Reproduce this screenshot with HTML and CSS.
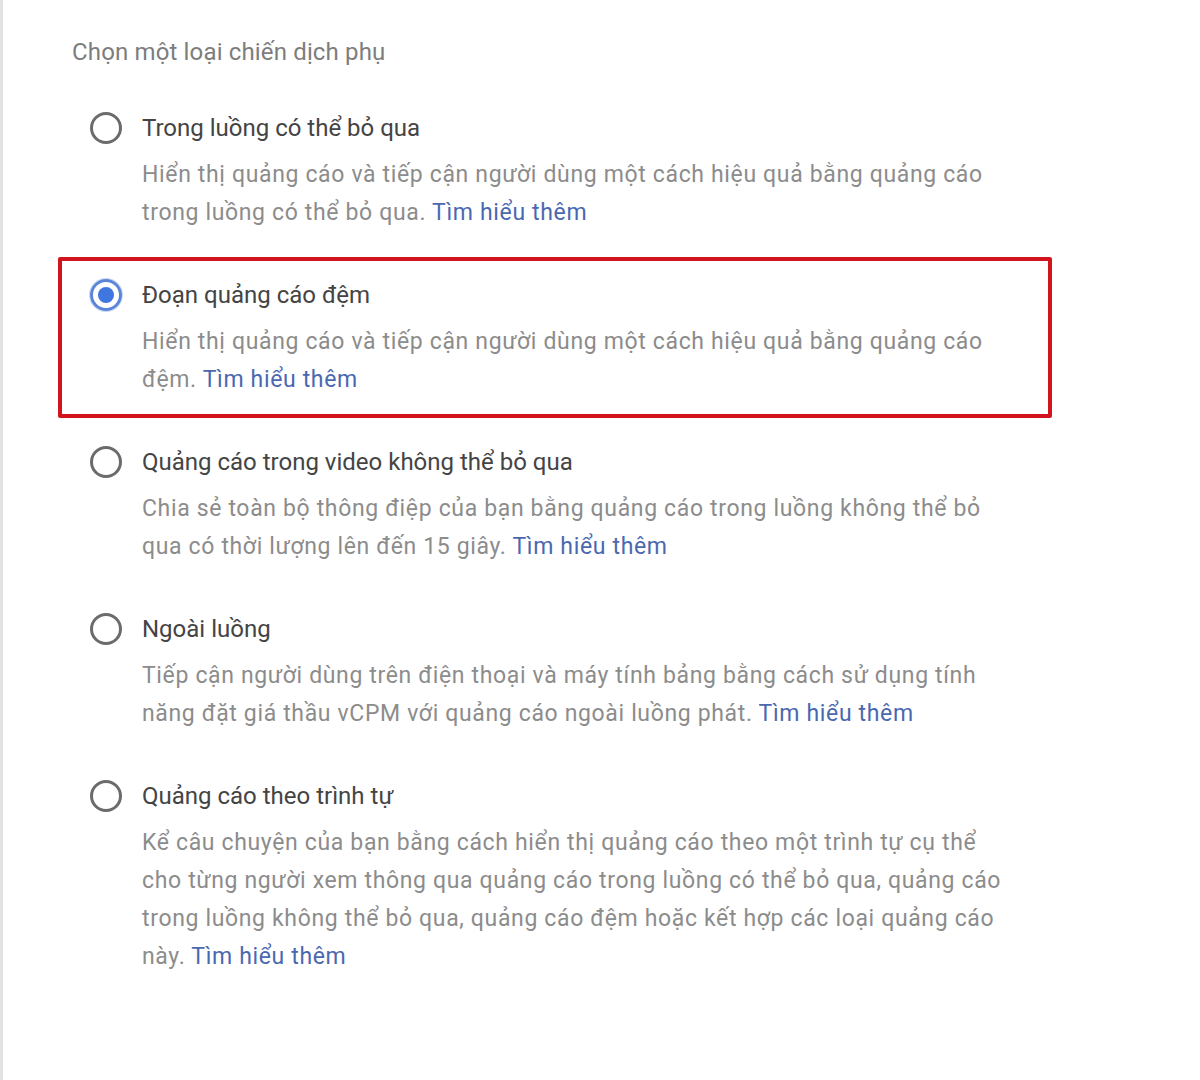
FILE: index.html
```html
<!DOCTYPE html>
<html lang="vi">
<head>
    <meta charset="UTF-8">
    <meta name="viewport" content="width=device-width, initial-scale=1.0">
    <title>Chọn một loại chiến dịch phụ</title>
    <link rel="stylesheet" href="styles.css">
</head>
<body>
    <div class="panel">
        <div class="heading">Chọn một loại chiến dịch phụ</div>
        <div class="options">
            <label class="option">
                <span class="radio"></span>
                <span class="text">
                    <span class="title">Trong luồng có thể bỏ qua</span>
                    <span class="desc">Hiển thị quảng cáo và tiếp cận người dùng một cách hiệu quả bằng quảng cáo trong luồng có thể bỏ qua. <a href="#">Tìm hiểu thêm</a></span>
                </span>
            </label>
            <label class="option highlight">
                <span class="radio checked"></span>
                <span class="text">
                    <span class="title">Đoạn quảng cáo đệm</span>
                    <span class="desc">Hiển thị quảng cáo và tiếp cận người dùng một cách hiệu quả bằng quảng cáo đệm. <a href="#">Tìm hiểu thêm</a></span>
                </span>
            </label>
            <label class="option">
                <span class="radio"></span>
                <span class="text">
                    <span class="title">Quảng cáo trong video không thể bỏ qua</span>
                    <span class="desc">Chia sẻ toàn bộ thông điệp của bạn bằng quảng cáo trong luồng không thể bỏ qua có thời lượng lên đến 15 giây. <a href="#">Tìm hiểu thêm</a></span>
                </span>
            </label>
            <label class="option">
                <span class="radio"></span>
                <span class="text">
                    <span class="title">Ngoài luồng</span>
                    <span class="desc">Tiếp cận người dùng trên điện thoại và máy tính bảng bằng cách sử dụng tính năng đặt giá thầu vCPM với quảng cáo ngoài luồng phát. <a href="#">Tìm hiểu thêm</a></span>
                </span>
            </label>
            <label class="option">
                <span class="radio"></span>
                <span class="text">
                    <span class="title">Quảng cáo theo trình tự</span>
                    <span class="desc">Kể câu chuyện của bạn bằng cách hiển thị quảng cáo theo một trình tự cụ thể cho từng người xem thông qua quảng cáo trong luồng có thể bỏ qua, quảng cáo trong luồng không thể bỏ qua, quảng cáo đệm hoặc kết hợp các loại quảng cáo này. <a href="#">Tìm hiểu thêm</a></span>
                </span>
            </label>
        </div>
    </div>
</body>
</html>
```

FILE: styles.css
```css
body {
    margin: 0;
    background-color: #fff;
    font-family: Roboto, "Noto Sans", Arial, sans-serif;
}
.panel {
    min-height: 1080px;
    box-sizing: border-box;
    border-left: 3px solid #e2e2e2;
    padding: 37px 0 0 55px;
}
.heading {
    padding-left: 14px;
    font-size: 24px;
    line-height: 30px;
    letter-spacing: 0.15px;
    color: #7d7d7d;
    margin-bottom: 23px;
}
.options {
    display: flex;
    flex-direction: column;
    gap: 6px;
}
.option {
    width: 994px;
    box-sizing: border-box;
    display: grid;
    grid-template-columns: 32px 1fr;
    column-gap: 20px;
    padding: 16px 0 15px 28px;
    border: 4px solid transparent;
    border-radius: 2px;
}
.option.highlight {
    border-color: #d2141e;
}
.radio {
    width: 32px;
    height: 32px;
    margin-top: 2px;
    box-sizing: border-box;
    border: 3px solid #6b6b6b;
    border-radius: 50%;
}
.radio.checked {
    border-color: #5b86d8;
    box-shadow: 0 0 0 1px #c9d8f2;
    display: flex;
    align-items: center;
    justify-content: center;
}
.radio.checked::after {
    content: "";
    width: 16px;
    height: 16px;
    border-radius: 50%;
    background-color: #3f76df;
}
.text {
    display: flex;
    flex-direction: column;
    width: 868px;
}
.title {
    font-size: 24px;
    line-height: 36px;
    color: #444;
}
.desc {
    margin-top: 10px;
    font-size: 23px;
    line-height: 38px;
    letter-spacing: 0.65px;
    color: #8c8c8c;
}
.desc a {
    color: #4a68b0;
    text-decoration: none;
}
```
